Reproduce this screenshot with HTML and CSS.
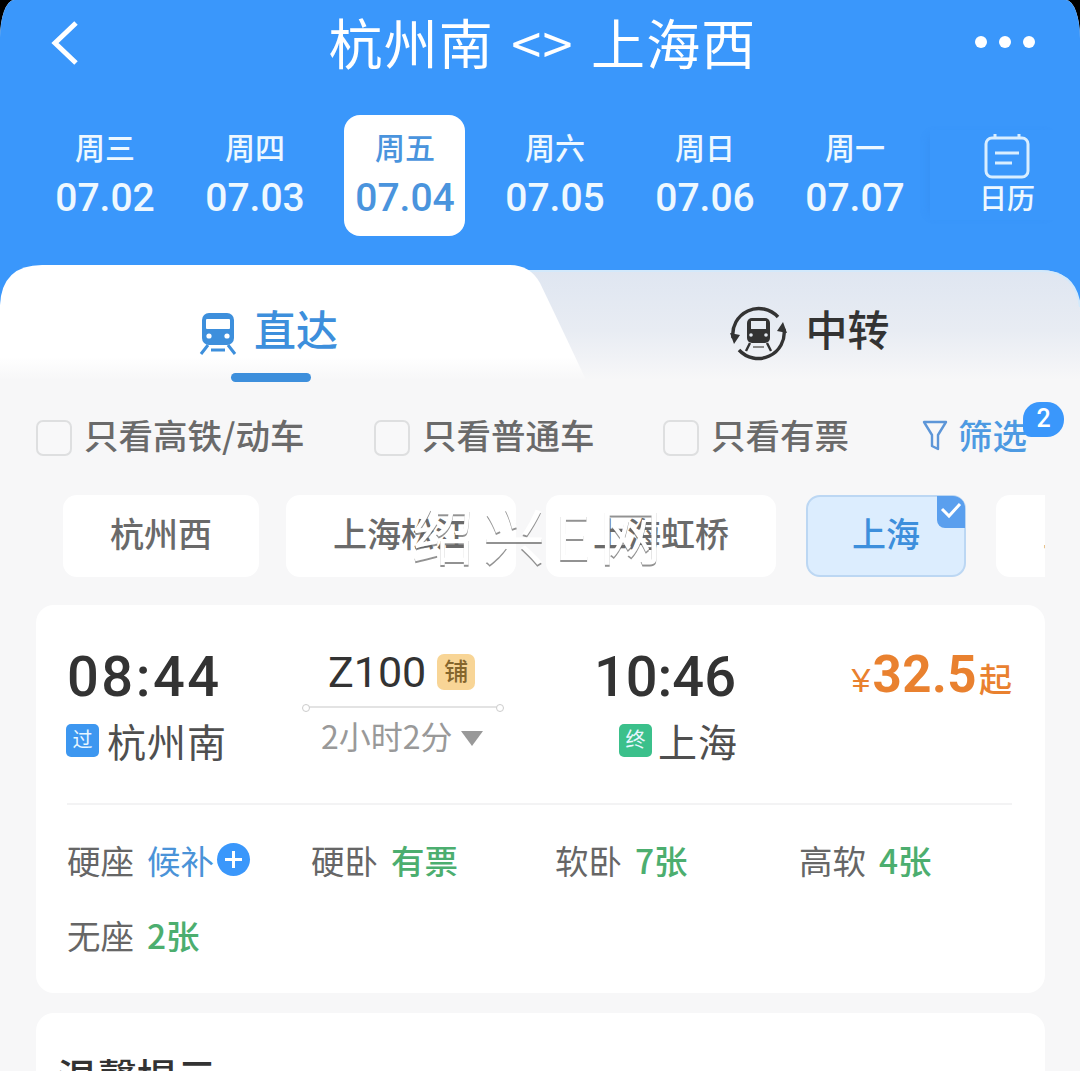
FILE: index.html
```html
<!DOCTYPE html>
<html lang="zh-CN">
<head>
<meta charset="utf-8">
<title>杭州南 上海西</title>
<link rel="stylesheet" href="styles.css">
</head>
<body>
<div class="app">
  <header class="head">
    <div class="nav">
      <div class="nav-side">
        <svg class="back" width="30" height="46" viewBox="0 0 30 46"><path d="M26 3 L5 23 L26 43" fill="none" stroke="#fff" stroke-width="5"/></svg>
      </div>
      <h1 class="title">杭州南 &lt;&gt; 上海西</h1>
      <div class="nav-side nav-side-r"><div class="dots"><i></i><i></i><i></i></div></div>
    </div>
    <div class="dates">
      <div class="date"><span class="wk">周三</span><span class="dn">07.02</span></div>
      <div class="date"><span class="wk">周四</span><span class="dn">07.03</span></div>
      <div class="date date-on"><span class="wk">周五</span><span class="dn">07.04</span></div>
      <div class="date"><span class="wk">周六</span><span class="dn">07.05</span></div>
      <div class="date"><span class="wk">周日</span><span class="dn">07.06</span></div>
      <div class="date"><span class="wk">周一</span><span class="dn">07.07</span></div>
      <div class="cal">
        <svg width="46" height="46" viewBox="0 0 46 46"><rect x="2" y="5" width="42" height="39" rx="6" fill="none" stroke="#d9eeff" stroke-width="3"/><path d="M11 1V6M35 1V6" stroke="#d9eeff" stroke-width="3"/><path d="M11 20H35M11 30H28" stroke="#d9eeff" stroke-width="3"/></svg>
        <span class="cal-t">日历</span>
      </div>
    </div>
  </header>

  <section class="tabs">
    <svg class="tabs-bg" width="1080" height="115" viewBox="0 0 1080 115">
      <defs>
        <linearGradient id="gr" x1="0" y1="0" x2="0" y2="1"><stop offset="0" stop-color="#dfe6f1"/><stop offset=".55" stop-color="#e8ecf3"/><stop offset="1" stop-color="#f7f7f8"/></linearGradient>
        <linearGradient id="gl" x1="0" y1="0" x2="0" y2="1"><stop offset="0" stop-color="#fff"/><stop offset=".8" stop-color="#fff"/><stop offset="1" stop-color="#f7f7f8"/></linearGradient>
      </defs>
      <path d="M480 5 H1040 Q1076 5 1080 42 V115 H480 Z" fill="url(#gr)"/>
      <path d="M480 6 H1040 Q1076 6 1080 42" fill="none" stroke="#d3e9fb" stroke-width="2"/>
      <path d="M0 115 V40 Q2 0 42 0 H510 Q530 0 540 18 Q565 70 586 115 Z" fill="url(#gl)"/>
    </svg>
    <div class="tab tab-on">
      <svg width="38" height="42" viewBox="0 0 38 42"><rect x="3" y="0" width="32" height="32" rx="7" fill="#3d8fdc"/><rect x="7" y="6" width="24" height="10" rx="1" fill="#fff"/><circle cx="10" cy="23" r="2.6" fill="#fff"/><circle cx="28" cy="23" r="2.6" fill="#fff"/><path d="M9 32 L2 41 M29 32 L36 41 M12 37 H26" stroke="#3d8fdc" stroke-width="3" fill="none"/></svg>
      <span>直达</span>
      <i class="bar"></i>
    </div>
    <div class="tab tab-off">
      <svg width="58" height="56" viewBox="0 0 58 56"><path d="M3 33 A26 26 0 0 1 48 12 M54 24 A26 26 0 0 1 9 45" fill="none" stroke="#333" stroke-width="3.4"/><path d="M0 28 L10 30 L4 39 Z M57 28 L47 26 L53 17 Z" fill="#333"/><rect x="17" y="13" width="23" height="25" rx="5" fill="#333"/><rect x="21" y="16" width="15" height="8" fill="#e6ebf2"/><circle cx="21" cy="30" r="1.8" fill="#e6ebf2"/><circle cx="36" cy="30" r="1.8" fill="#e6ebf2"/><path d="M20 38 L16 46 M37 38 L41 46" stroke="#333" stroke-width="2.4" fill="none"/><path d="M23 42 H34" stroke="#888" stroke-width="2" fill="none"/></svg>
      <span>中转</span>
    </div>
  </section>

  <div class="filters">
    <label class="chk chk-1"><i class="box"></i>只看高铁/动车</label>
    <label class="chk chk-2"><i class="box"></i>只看普通车</label>
    <label class="chk chk-3"><i class="box"></i>只看有票</label>
    <div class="screen">
      <svg width="26" height="32" viewBox="0 0 26 32"><path d="M2 2 H24 L16 15 V29 L10 26 V15 Z" fill="none" stroke="#5d96d8" stroke-width="2.4" stroke-linejoin="round"/></svg>
      <span>筛选</span>
      <b class="badge">2</b>
    </div>
  </div>

  <div class="chips">
    <div class="chip chip-a">杭州西</div>
    <div class="chip">上海松江</div>
    <div class="chip">上海虹桥</div>
    <div class="chip chip-on">上海<i class="tick"><svg width="22" height="18" viewBox="0 0 22 18"><path d="M2 8 L9 15 L20 3" fill="none" stroke="#fff" stroke-width="3"/></svg></i></div>
    <div class="chip">上海南</div>
  </div>

  <article class="card">
    <div class="route">
      <div class="from">
        <div class="time">08:44</div>
        <div class="st"><i class="tag tag-b">过</i>杭州南</div>
      </div>
      <div class="mid">
        <div class="no"><span>Z100</span><i class="pu">铺</i></div>
        <div class="line"></div>
        <div class="dur">2小时2分<i class="tri"></i></div>
      </div>
      <div class="to">
        <div class="time time-to">10:46</div>
        <div class="st st-to"><i class="tag tag-g">终</i>上海</div>
      </div>
      <div class="price"><small>¥</small><b>32.5</b><span>起</span></div>
    </div>
    <div class="seats">
      <div class="seat">硬座<em class="blue">候补</em><i class="plus"></i></div>
      <div class="seat">硬卧<em>有票</em></div>
      <div class="seat">软卧<em>7张</em></div>
      <div class="seat">高软<em>4张</em></div>
      <div class="seat">无座<em>2张</em></div>
    </div>
  </article>

  <article class="card card-tip">
    <h2 class="tip">温馨提示</h2>
  </article>

  <div class="mark">绍兴E网</div>
</div>
</body>
</html>
```
FILE: styles.css
```css
* { box-sizing: border-box; }
html, body { margin: 0; padding: 0; height: 100%; overflow: hidden; background: #000; }
body { font-family: "Noto Sans CJK SC", "Noto Sans", sans-serif; }
i, em { font-style: normal; }

.app { position: relative; width: 1080px; height: 1071px; overflow: hidden; background: #f7f7f8; border-radius: 14px 14px 0 0 / 38px 38px 0 0; }

.head { height: 265px; background: #3a97fb; color: #fff; }
.nav { height: 90px; padding: 0 45px 0 50px; display: flex; align-items: center; justify-content: space-between; }
.nav-side { flex: 1; display: flex; }
.nav-side-r { justify-content: flex-end; }
.back { flex: none; margin-top: -5px; }
.title { margin: -6px 0 0; font-size: 54px; font-weight: 400; line-height: 90px; letter-spacing: 1.2px; word-spacing: 4px; white-space: pre; }
.dots { display: flex; gap: 12px; margin-top: -7px; }
.dots i { width: 12px; height: 12px; border-radius: 50%; background: #fff; }

.dates { display: flex; margin-top: 25px; padding-left: 30px; }
.date { width: 150px; height: 121px; display: flex; flex-direction: column; align-items: center; color: #eef8ff; }
.date-on { position: relative; }
.date-on::before { content: ""; position: absolute; left: 14px; top: 0; width: 121px; height: 121px; border-radius: 16px; background: #fff; }
.date-on .wk, .date-on .dn { position: relative; color: #4a94dd; }
.wk { font-size: 30px; font-weight: 500; line-height: 36px; margin-top: 13px; }
.dn { font-family: Roboto, "Liberation Sans", sans-serif; font-size: 39px; font-weight: 500; line-height: 46px; margin-top: 11px; }
.cal { width: 130px; height: 90px; margin-top: 15px; padding-left: 24px; display: flex; flex-direction: column; align-items: center; box-shadow: -6px 0 10px -6px rgba(40,110,210,.2); }
.cal svg { margin-top: 3px; flex: none; }
.cal-t { font-size: 28px; font-weight: 500; line-height: 34px; margin-top: 1px; color: #eef8ff; }

.tabs { position: relative; height: 115px; display: flex; background: linear-gradient(#3a97fb 60px, #f7f7f8 60px); }
.tabs-bg { position: absolute; left: 0; top: 0; }
.tab { position: relative; flex: none; width: 540px; height: 115px; padding-top: 35px; display: flex; align-items: flex-start; justify-content: center; gap: 17px; font-size: 42px; font-weight: 500; color: #3d8fdc; }
.tab span { line-height: 56px; }
.tab-on { padding-right: 3px; }
.tab-on svg { margin-top: 13px; }
.tab-off { color: #333; }
.tab-off svg { margin-top: 5px; }
.bar { position: absolute; left: 231px; top: 108px; width: 80px; height: 9px; border-radius: 5px; background: #3d8fdc; }

.filters { display: flex; align-items: flex-start; height: 115px; padding-top: 40px; font-size: 34.5px; font-weight: 500; color: #6a6a6a; }
.chk { display: flex; align-items: flex-start; gap: 12px; height: 36px; line-height: 28px; white-space: nowrap; }
.chk-1 { margin-left: 36px; width: 338px; }
.chk-2 { width: 289px; }
.chk-3 { width: 259px; }
.box { width: 36px; height: 36px; border: 2.5px solid #dedfe0; border-radius: 7px; background: #f8f8f9; flex: none; }
.screen { position: relative; display: flex; align-items: flex-start; gap: 10px; height: 36px; line-height: 28px; color: #4d9ae2; }
.screen svg { margin-top: 0; flex: none; }
.badge { position: absolute; left: 101px; top: -18px; width: 41px; height: 35px; border-radius: 17px 17px 17px 8px; background: #3a97fb; color: #fff; font: 500 25px/33px Roboto, sans-serif; text-align: center; }

.chips { width: 1045px; padding-left: 63px; display: flex; gap: 30px; overflow: hidden; }
.chip { flex: none; position: relative; height: 82px; padding: 0 47px; border-radius: 14px; background: #fff; color: #6a6a6a; font-size: 34px; font-weight: 500; line-height: 76px; white-space: nowrap; }
.chip-a { margin-right: -3px; }
.chip-on { padding: 0 44px; background: #dcedfe; color: #3d8fdc; border: 2px solid #bcd7f3; line-height: 72px; }
.tick { position: absolute; right: -1px; top: -1px; width: 28px; height: 32px; border-radius: 0 12px 0 8px; background: #5a9fee; display: flex; justify-content: center; padding-top: 5px; }

.card { margin: 28px 35px 0 36px; background: #fff; border-radius: 18px; }
.route { position: relative; height: 200px; margin: 0 33px 0 31px; padding-top: 1px; border-bottom: 2px solid #f3f3f4; display: flex; color: #333; }
.time { font: 500 56px/62px Roboto, "Liberation Sans", sans-serif; letter-spacing: 2.5px; margin-top: 40px; color: #333; }
.st { display: flex; align-items: center; gap: 8px; margin-top: 4px; font-size: 39px; line-height: 56px; color: #4f4f4f; letter-spacing: 1px; }
.from { width: 236px; }
.from .st { margin-left: -1px; }
.st-to { margin-right: -2px; gap: 6px; }
.tag { width: 33px; height: 33px; border-radius: 5px; color: #e8f6ff; font-size: 20px; line-height: 30px; text-align: center; letter-spacing: 0; }
.tag-b { background: #3d97f0; }
.tag-g { background: #3bc08b; }
.mid { width: 293px; }
.no { display: flex; align-items: center; gap: 11px; margin-top: 41px; margin-left: 25px; font: 400 43px/50px Roboto, "Liberation Sans", sans-serif; color: #333; }
.pu { width: 38px; height: 36px; border-radius: 7px; background: #f8d596; color: #85662d; font: 500 24px/32px "Noto Sans CJK SC", sans-serif; text-align: center; }
.line { position: relative; width: 200px; height: 2px; margin-top: 9px; background: #e3e3e3; }
.line::before, .line::after { content: ""; position: absolute; top: -2px; width: 6px; height: 6px; border: 1px solid #ccc; border-radius: 50%; background: #fff; }
.line::before { left: -1px; }
.line::after { right: -1px; }
.dur { display: flex; align-items: center; gap: 8px; margin-left: 18px; margin-top: 5px; font-size: 32px; line-height: 44px; color: #999; white-space: nowrap; }
.tri { width: 0; height: 0; border-left: 11px solid transparent; border-right: 11px solid transparent; border-top: 15px solid #999; margin-top: 6px; }
.to { width: 140px; display: flex; flex-direction: column; align-items: flex-end; }
.time-to { letter-spacing: 0; white-space: nowrap; }
.price { position: absolute; right: 0; top: 40px; display: flex; align-items: baseline; color: #e9812f; }
.price small { font-size: 34px; font-family: "Liberation Sans", sans-serif; margin-right: 2px; }
.price b { font: 700 51px/60px Roboto, "Liberation Sans", sans-serif; letter-spacing: .5px; }
.price span { font-size: 33px; font-weight: 500; line-height: 40px; margin-left: 2px; }

.seats { display: grid; grid-template-columns: repeat(4, 244px); grid-auto-rows: 75px; padding: 17px 0 21px 31px; }
.seat { display: flex; align-items: center; gap: 13px; font-size: 33.5px; color: #666; white-space: nowrap; }
.seat em { color: #4cae6f; font-weight: 500; }
.seat em.blue { color: #4a93d8; font-weight: 400; }
.plus { position: relative; width: 33px; height: 33px; margin-left: -10px; border-radius: 50%; background: #3a97fb; }
.plus::before, .plus::after { content: ""; position: absolute; background: #fff; }
.plus::before { left: 8px; top: 15px; width: 17px; height: 2.5px; }
.plus::after { left: 15px; top: 8px; width: 2.5px; height: 17px; }

.card-tip { margin-top: 20px; height: 120px; padding: 38px 21px; }
.tip { margin: 0; font-size: 40px; font-weight: 500; line-height: 50px; color: #333; }

.mark { position: absolute; left: 412px; top: 493px; font-size: 62px; line-height: 80px; font-weight: 400; letter-spacing: 9px; white-space: nowrap; color: #fff; text-shadow: 0 2px 0 rgba(100,100,100,.7); pointer-events: none; }
```
